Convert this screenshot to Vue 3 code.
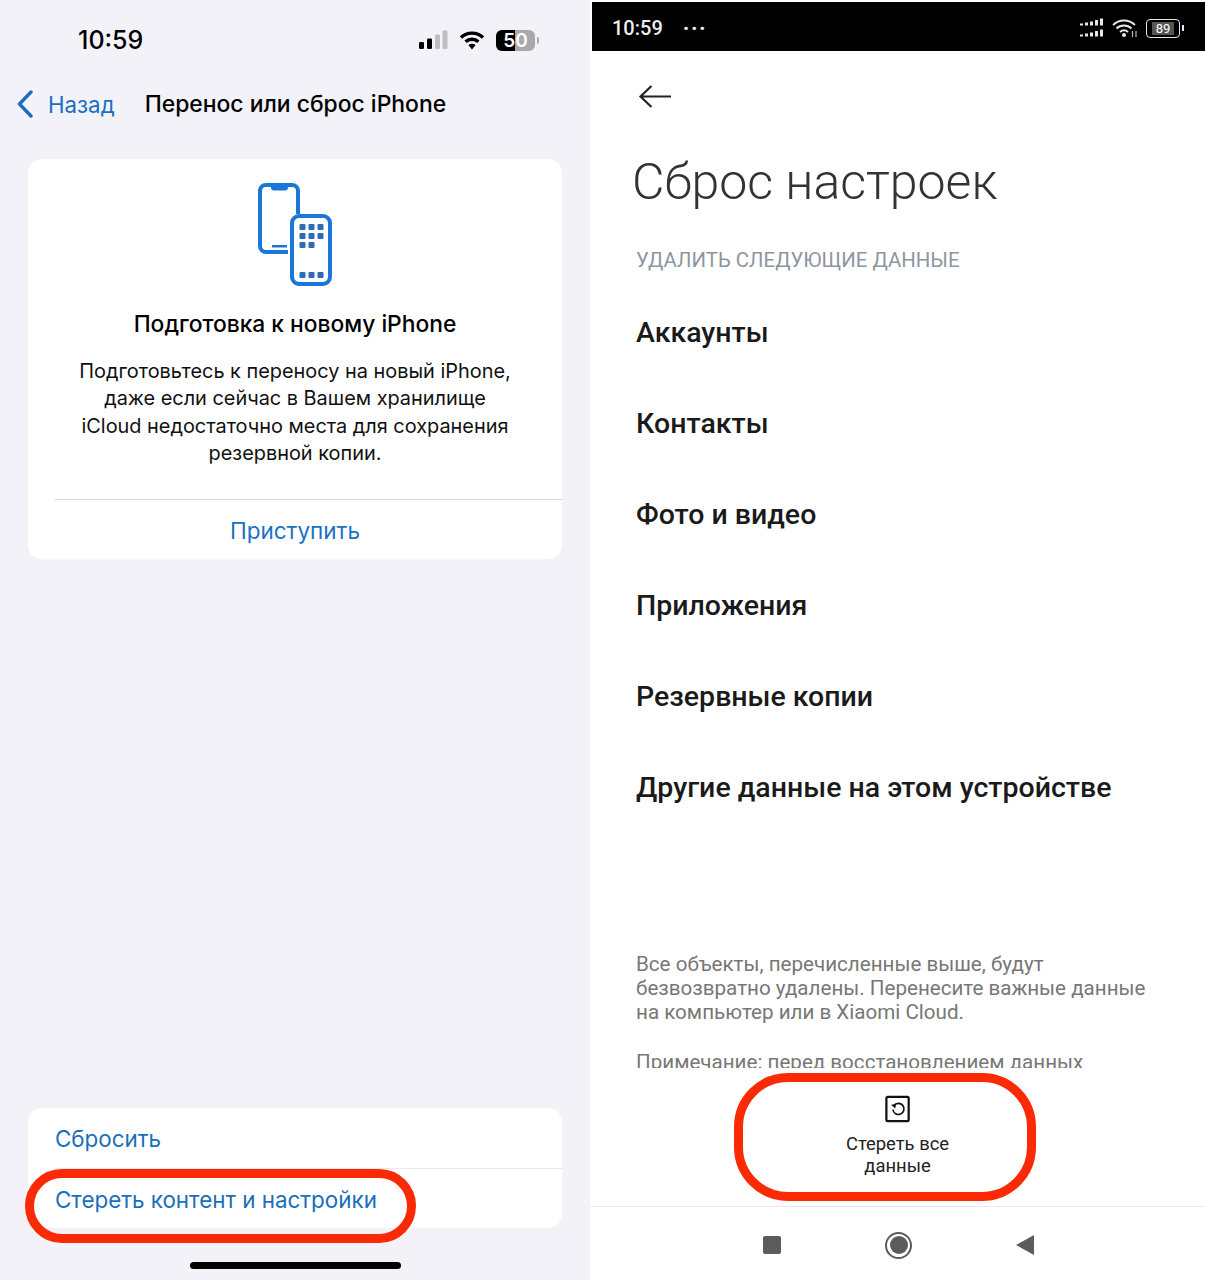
<script setup>
const items = ['Аккаунты', 'Контакты', 'Фото и видео', 'Приложения', 'Резервные копии', 'Другие данные на этом устройстве']
const dots = [
  [0, 0], [1, 0], [2, 0],
  [0, 1], [1, 1], [2, 1],
  [0, 2], [1, 2],
  [0, 5.33], [1, 5.33], [2, 5.33],
]
</script>

<template>
  <div class="page">
    <section class="ios">
      <div class="ios-status">
        <span class="ios-time">10:59</span>
        <div class="ios-icons">
          <svg width="30" height="20" viewBox="0 0 30 20">
            <rect x="1" y="12" width="5" height="7" rx="1.2" fill="#000" />
            <rect x="9" y="8.5" width="5" height="10.5" rx="1.2" fill="#000" />
            <rect x="17" y="4.5" width="5" height="14.5" rx="1.2" fill="#bdbdc2" />
            <rect x="24.5" y="0.5" width="5" height="18.5" rx="1.2" fill="#bdbdc2" />
          </svg>
          <svg width="26" height="20" viewBox="0 0 26 20">
            <path d="M2 7.5C8 1.6 18 1.6 24 7.5" fill="none" stroke="#000" stroke-width="3.4" />
            <path d="M6.6 11.8C10.2 8.4 15.8 8.4 19.4 11.8" fill="none" stroke="#000" stroke-width="3.4" />
            <path d="M9.4 15L13 19.4L16.6 15C14.6 13.4 11.4 13.4 9.4 15Z" fill="#000" />
          </svg>
          <div class="ios-batt">
            <div class="ios-batt-body">
              <div class="ios-batt-fill"></div>
              <span class="ios-batt-num">50</span>
            </div>
            <span class="ios-batt-cap"></span>
          </div>
        </div>
      </div>

      <div class="ios-nav">
        <svg class="ios-chev" width="18" height="28" viewBox="0 0 18 28">
          <path d="M15 2L3.500 14L15 26" fill="none" stroke="#1b6fc0" stroke-width="3.400" stroke-linecap="round" stroke-linejoin="round" />
        </svg>
        <span class="ios-back">Назад</span>
        <span class="ios-title">Перенос или сброс iPhone</span>
      </div>

      <div class="ios-card prep">
        <svg class="prep-icon" width="76" height="106" viewBox="0 0 76 106">
          <path d="M32 71H10C6.500 71 4 68.500 4 65V10C4 6.500 6.500 4 10 4H36C39.500 4 42 6.500 42 10V33" fill="none" stroke="#1a76d8" stroke-width="4" />
          <path d="M15 4H32V6.500C32 8.500 31 9.500 29 9.500H18C16 9.500 15 8.500 15 6.500Z" fill="#1a76d8" />
          <rect x="16" y="64" width="15" height="2.500" fill="#1a76d8" />
          <rect x="36" y="35" width="38" height="68" rx="7" fill="#fff" stroke="#1a76d8" stroke-width="4" />
          <rect
            v-for="(d, i) in dots"
            :key="i"
            :x="43.500 + d[0] * 9"
            :y="43 + d[1] * 9"
            width="6"
            height="6"
            rx="1"
            fill="#2a6db5"
          />
        </svg>
        <h2 class="prep-title">Подготовка к новому iPhone</h2>
        <p class="prep-text">
          Подготовьтесь к переносу на новый iPhone,<br />
          даже если сейчас в Вашем хранилище<br />
          iCloud недостаточно места для сохранения<br />
          резервной копии.
        </p>
        <div class="prep-link">Приступить</div>
      </div>

      <div class="ios-spacer"></div>

      <div class="ios-card actions">
        <div class="action">Сбросить</div>
        <div class="action action-second">Стереть контент и настройки</div>
      </div>

      <div class="home-bar"></div>
      <div class="oval oval-left"></div>
    </section>

    <section class="miui">
      <div class="miui-status">
        <span class="miui-time">10:59</span>
        <span class="miui-dots">···</span>
        <div class="miui-icons">
          <svg width="24" height="20" viewBox="0 0 24 19">
            <g fill="#e8e8e8">
              <rect x="0" y="5" width="3" height="2" /><rect x="5" y="4" width="3" height="3" />
              <rect x="10" y="3" width="3" height="4" /><rect x="15" y="1.500" width="3" height="5.500" />
              <rect x="20" y="0" width="3" height="7" />
              <rect x="0" y="16" width="3" height="2" /><rect x="5" y="15" width="3" height="3" />
              <rect x="10" y="14" width="3" height="4" /><rect x="15" y="12.500" width="3" height="5.500" />
              <rect x="20" y="11" width="3" height="7" />
            </g>
          </svg>
          <svg width="26" height="20" viewBox="0 0 26 20">
            <g fill="none" stroke="#e8e8e8" stroke-width="1.800">
              <path d="M1 7C7 1 17 1 23 7" />
              <path d="M4.500 10.500C8.500 6.500 15.500 6.500 19.500 10.500" />
              <path d="M8 14C10.500 11.800 13.500 11.800 16 14" />
            </g>
            <circle cx="12" cy="17" r="2" fill="#e8e8e8" />
            <path d="M20.500 13V19M24 13V19" stroke="#bbb" stroke-width="1.200" />
          </svg>
          <div class="miui-batt">
            <div class="miui-batt-body"><span class="miui-batt-num">89</span></div>
            <span class="miui-batt-cap"></span>
          </div>
        </div>
      </div>

      <div class="miui-content">
        <svg class="miui-back" width="34" height="26" viewBox="0 0 34 26">
          <path d="M33 12.500H3M13.500 2L2.500 12.500L13.500 23" fill="none" stroke="#222" stroke-width="2.200" />
        </svg>
        <h1 class="miui-title">Сброс настроек</h1>
        <div class="miui-sub">УДАЛИТЬ СЛЕДУЮЩИЕ ДАННЫЕ</div>
        <div class="miui-list">
          <div v-for="item in items" :key="item" class="miui-item">{{ item }}</div>
        </div>
        <div class="miui-note">
          <p>Все объекты, перечисленные выше, будут безвозвратно удалены. Перенесите важные данные на компьютер или в Xiaomi Cloud.</p>
          <p class="note-second">Примечание: перед восстановлением данных</p>
        </div>
      </div>

      <div class="wipe">
        <svg width="26" height="28" viewBox="0 0 28 30">
          <rect x="1.500" y="2" width="24" height="26" rx="1.500" fill="none" stroke="#111" stroke-width="2.400" />
          <path d="M9.500 11.500A6 6 0 1 1 8.500 15.500" fill="none" stroke="#111" stroke-width="1.800" />
          <path d="M6.500 10.500L12 9.500L11 14.500Z" fill="#111" />
        </svg>
        <div class="wipe-label">Стереть все<br />данные</div>
      </div>

      <div class="miui-nav">
        <span class="nav-square"></span>
        <span class="nav-circle"><span class="nav-dot"></span></span>
        <svg width="18" height="20" viewBox="0 0 18 20"><path d="M18 0V20L0 10Z" fill="#5c5c5c" /></svg>
      </div>
      <div class="oval oval-right"></div>
    </section>
  </div>
</template>

<style>
html, body {
  margin: 0;
  background: #fff;
}
</style>

<style scoped>
.page {
  display: grid;
  grid-template-columns: 590px 615px;
  width: 1205px;
  height: 1280px;
  overflow: hidden;
}

/* iPhone side */
.ios {
  position: relative;
  display: flex;
  flex-direction: column;
  height: 1280px;
  background: #f2f2f8;
  font-family: Inter, "Liberation Sans", sans-serif;
  color: #000;
}
.ios-status {
  display: flex;
  align-items: center;
  justify-content: space-between;
  height: 40px;
  padding: 20px 51px 0 78px;
}
.ios-time {
  font-size: 25px;
  font-weight: 500;
}
.ios-icons {
  display: flex;
  align-items: center;
  gap: 11px;
}
.ios-batt {
  display: flex;
  align-items: center;
  gap: 2px;
}
.ios-batt-body {
  position: relative;
  width: 39px;
  height: 21px;
  border-radius: 6px;
  background: #a9a9ac;
  overflow: hidden;
}
.ios-batt-fill {
  width: 19px;
  height: 21px;
  background: #000;
}
.ios-batt-num {
  position: absolute;
  left: 0;
  right: 0;
  top: 0;
  text-align: center;
  font-size: 19px;
  line-height: 21px;
  font-weight: 600;
  color: #fff;
}
.ios-batt-cap {
  width: 2px;
  height: 7px;
  border-radius: 0 2px 2px 0;
  background: #a9a9ac;
}
.ios-nav {
  display: flex;
  align-items: center;
  height: 28px;
  margin-top: 30px;
  padding-left: 16px;
}
.ios-back {
  margin-left: 14px;
  font-size: 22.300px;
  color: #1b6fc0;
}
.ios-title {
  margin-left: 30px;
  font-size: 22.900px;
  font-weight: 500;
}
.ios-card {
  margin: 0 28px;
  background: #fff;
  border-radius: 14px;
}
.prep {
  display: flex;
  flex-direction: column;
  align-items: center;
  height: 400px;
  margin-top: 41px;
}
.prep-icon {
  flex: none;
  margin-top: 22px;
  margin-left: -2px;
}
.prep-title {
  margin: 23px 0 0;
  font-size: 22.800px;
  line-height: 28px;
  font-weight: 500;
}
.prep-text {
  margin: 20px 0 0;
  font-size: 19.900px;
  line-height: 27.300px;
  text-align: center;
  color: #111;
}
.prep-link {
  flex: none;
  align-self: stretch;
  margin: 32px 0 0 27px;
  padding-right: 27px;
  height: 60px;
  line-height: 62px;
  border-top: 1px solid #d8d8dc;
  text-align: center;
  font-size: 22.500px;
  color: #1b72c4;
}
.ios-spacer {
  flex: 1;
}
.actions {
  height: 120px;
}
.action {
  height: 60px;
  margin-left: 27px;
  line-height: 61px;
  font-size: 22.400px;
  color: #1b6fb8;
}
.action-second {
  border-top: 1px solid #e8e8ec;
}
.home-bar {
  width: 211px;
  height: 7px;
  margin: 34px auto 11px;
  border-radius: 4px;
  background: #000;
}

/* Red marker rings */
.oval {
  position: absolute;
  box-sizing: border-box;
  border: 9px solid #fa2a05;
}
.oval-left {
  left: 25px;
  top: 1169px;
  width: 391px;
  height: 74px;
  border-radius: 37px;
}
.oval-right {
  left: 144px;
  top: 1073px;
  width: 302px;
  height: 128px;
  border-radius: 54px;
}

/* Xiaomi side */
.miui {
  position: relative;
  display: flex;
  flex-direction: column;
  height: 1280px;
  background: #fff;
  font-family: Roboto, "Liberation Sans", sans-serif;
}
.miui-status {
  box-sizing: border-box;
  display: flex;
  align-items: center;
  height: 49px;
  margin: 2px 0 0 2px;
  padding: 3px 21px 0 20px;
  background: #000;
  color: #eee;
}
.miui-time {
  font-size: 20px;
  font-weight: 500;
}
.miui-dots {
  margin-left: 20px;
  font-size: 22px;
  font-weight: 700;
  letter-spacing: 1.500px;
}
.miui-icons {
  display: flex;
  align-items: center;
  gap: 8px;
  margin-left: auto;
}
.miui-batt {
  display: flex;
  align-items: center;
  gap: 2px;
}
.miui-batt-body {
  box-sizing: border-box;
  display: flex;
  align-items: center;
  justify-content: center;
  width: 34px;
  height: 19px;
  border: 1.500px solid #e8e8e8;
  border-radius: 4px;
}
.miui-batt-num {
  padding: 0 4px;
  font-size: 13px;
  line-height: 13px;
  background: #555;
  color: #fff;
}
.miui-batt-cap {
  width: 2px;
  height: 6px;
  background: #e8e8e8;
}
.miui-content {
  display: flex;
  flex-direction: column;
  flex: 1;
  min-height: 0;
  padding: 0 44px 0 46px;
  overflow: hidden;
}
.miui-back {
  display: block;
  flex: none;
  margin-top: 33px;
  margin-left: 2px;
}
.miui-title {
  margin: 39px 0 0 -4px;
  font-size: 50px;
  line-height: 66px;
  font-weight: 300;
  color: #333;
}
.miui-sub {
  margin-top: 32px;
  font-size: 20.400px;
  line-height: 26px;
  color: #8d96a0;
}
.miui-list {
  margin-top: 14px;
}
.miui-item {
  height: 91px;
  line-height: 91px;
  font-size: 28.500px;
  font-weight: 500;
  color: #1a1a1a;
}
.miui-note {
  flex: none;
  margin-top: 119px;
  font-size: 20.600px;
  line-height: 24px;
  color: #777;
}
.miui-note p {
  margin: 0;
}
.miui-note .note-second {
  margin-top: 26px;
}
.wipe {
  flex: none;
  display: flex;
  flex-direction: column;
  align-items: center;
  height: 139px;
  box-sizing: border-box;
  padding-top: 27px;
  border-bottom: 1px solid #e8e8e8;
}
.wipe-label {
  margin-top: 10px;
  font-size: 18.400px;
  line-height: 22px;
  text-align: center;
  color: #222;
}
.miui-nav {
  flex: none;
  display: flex;
  align-items: center;
  justify-content: space-between;
  box-sizing: border-box;
  height: 73px;
  padding: 3px 171px 0 173px;
}
.nav-square {
  width: 18px;
  height: 18px;
  border-radius: 2px;
  background: #5c5c5c;
}
.nav-circle {
  box-sizing: border-box;
  display: flex;
  align-items: center;
  justify-content: center;
  width: 27px;
  height: 27px;
  border: 2px solid #5c5c5c;
  border-radius: 50%;
}
.nav-dot {
  width: 18px;
  height: 18px;
  border-radius: 50%;
  background: #5c5c5c;
}
</style>
